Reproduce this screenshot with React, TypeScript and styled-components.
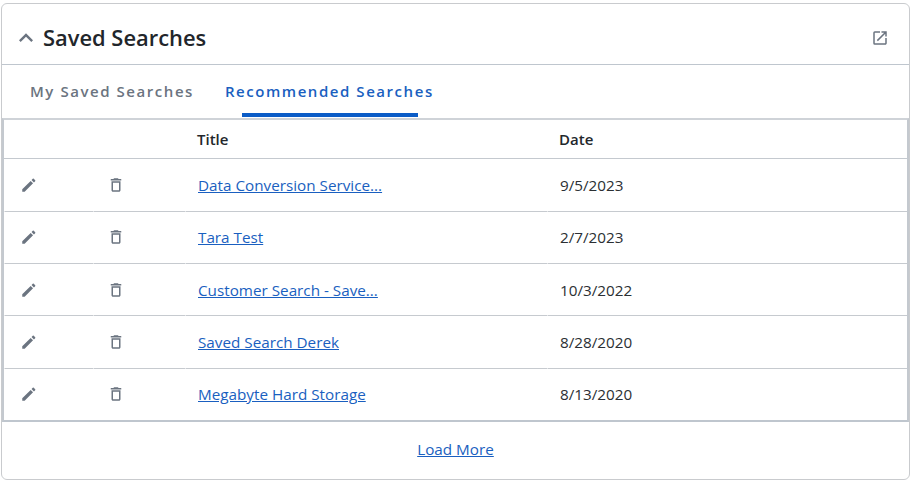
import React from "react";
import styled, { createGlobalStyle } from "styled-components";

const Global = createGlobalStyle`
  html, body { margin: 0; padding: 0; background: #fff; }
  body { font-family: "Open Sans", "Noto Sans", sans-serif; }
`;

const Card = styled.section`
  box-sizing: border-box;
  width: 909px;
  height: 477px;
  margin: 3px 0 0 1px;
  border: 1px solid #c9cbce;
  border-radius: 6px;
  background: #fff;
  display: flex;
  flex-direction: column;
`;

const Header = styled.header`
  box-sizing: border-box;
  height: 61px;
  flex: none;
  display: flex;
  align-items: center;
  padding: 7px 20px 0 10px;
  border-bottom: 1px solid #bfc6ce;
`;

const Heading = styled.h2`
  margin: 0 0 0 3px;
  flex: 1;
  font-size: 21.9px;
  line-height: 28px;
  font-weight: 600;
  color: #22262b;
`;

const Tabs = styled.nav`
  box-sizing: border-box;
  height: 53px;
  flex: none;
  display: flex;
  padding-left: 28px;
  gap: 31px;
`;

const Tab = styled.div<{ $active?: boolean }>`
  position: relative;
  height: 53px;
  display: flex;
  align-items: center;
  padding-bottom: 1px;
  box-sizing: border-box;
  font-size: 15px;
  font-weight: 600;
  letter-spacing: 1.55px;
  color: ${(p) => (p.$active ? "#1a5fc0" : "#6b7480")};
  ${(p) =>
    p.$active &&
    `&::after {
      content: "";
      position: absolute;
      left: 17px;
      right: 16px;
      bottom: 1px;
      height: 4px;
      background: #0b5cc7;
    }`}
`;

const Table = styled.table`
  box-sizing: border-box;
  width: 907px;
  height: 303px;
  flex: none;
  border-collapse: separate;
  border-spacing: 0;
  table-layout: fixed;
  border-top: 2px solid #cfd3d8;
  border-left: 2px solid #c4c9cf;
  border-right: 2px solid #c4c9cf;
  border-bottom: 2px solid #bfc6ce;
`;

const HeadCell = styled.th`
  box-sizing: border-box;
  height: 39.2px;
  padding: 0 0 0 12px;
  text-align: left;
  font-size: 15px;
  font-weight: 600;
  color: #23272c;
  border-bottom: 1px solid #c4c9cf;
`;

const Cell = styled.td`
  box-sizing: border-box;
  height: 52.4px;
  padding: 0 0 0 12px;
  font-size: 15.25px;
  color: #2b2f33;
  border-bottom: 1px solid #c6cacf;
  border-left: 1px solid #fff;
  tr:last-child & {
    height: 51.4px;
    border-bottom: none;
  }
`;

const IconCell = styled(Cell)`
  padding: 0 0 0 15px;
  line-height: 0;
`;

const TrashCell = styled(IconCell)`
  padding-left: 13px;
`;

const TitleLink = styled.a`
  color: #1a5fc0;
  text-decoration: underline;
`;

const Footer = styled.footer`
  flex: 1;
  display: flex;
  align-items: center;
  justify-content: center;
  padding-bottom: 4px;
`;

const LoadMore = styled.a`
  font-size: 15.25px;
  color: #1a5fc0;
  text-decoration: underline;
`;

const Icon = styled.svg`
  display: inline-block;
  fill: #6b7480;
`;

const ChevronIcon = styled(Icon)`
  flex: none;
`;

const Chevron = () => (
  <ChevronIcon width="28" height="28" viewBox="0 0 24 24">
    <path d="M12 8l-6 6 1.41 1.41L12 10.83l4.59 4.58L18 14z" />
  </ChevronIcon>
);
const External = () => (
  <Icon width="18" height="18" viewBox="0 0 24 24">
    <path d="M19 19H5V5h7V3H5a2 2 0 0 0-2 2v14a2 2 0 0 0 2 2h14c1.1 0 2-.9 2-2v-7h-2v7zM14 3v2h3.59l-9.83 9.83 1.41 1.41L19 6.41V10h2V3h-7z" />
  </Icon>
);
const Pencil = () => (
  <Icon width="18" height="18" viewBox="0 0 24 24">
    <path d="M3 21v-3.2L14.2 6.6l3.2 3.2L6.2 21H3zM15.4 5.4l1.6-1.6a1 1 0 0 1 1.4 0l1.8 1.8a1 1 0 0 1 0 1.4l-1.6 1.6-3.2-3.2z" />
  </Icon>
);
const Trash = () => (
  <Icon width="18" height="18" viewBox="0 0 24 24">
    <path d="M16 9v10H8V9h8m-1.5-6h-5l-1 1H5v2h14V4h-3.5l-1-1zM18 7H6v12c0 1.1.9 2 2 2h8c1.1 0 2-.9 2-2V7z" />
  </Icon>
);

const rows = [
  ["Data Conversion Service...", "9/5/2023"],
  ["Tara Test", "2/7/2023"],
  ["Customer Search - Save...", "10/3/2022"],
  ["Saved Search Derek", "8/28/2020"],
  ["Megabyte Hard Storage", "8/13/2020"],
];

export default function App() {
  return (
    <>
      <Global />
      <Card>
        <Header>
          <Chevron />
          <Heading>Saved Searches</Heading>
          <External />
        </Header>
        <Tabs>
          <Tab>My Saved Searches</Tab>
          <Tab $active>Recommended Searches</Tab>
        </Tabs>
        <Table>
          <colgroup>
            <col style={{ width: 89 }} />
            <col style={{ width: 92 }} />
            <col style={{ width: 362 }} />
            <col />
          </colgroup>
          <thead>
            <tr>
              <HeadCell />
              <HeadCell />
              <HeadCell>Title</HeadCell>
              <HeadCell>Date</HeadCell>
            </tr>
          </thead>
          <tbody>
            {rows.map(([title, date]) => (
              <tr key={title}>
                <IconCell><Pencil /></IconCell>
                <TrashCell><Trash /></TrashCell>
                <Cell><TitleLink href="#">{title}</TitleLink></Cell>
                <Cell>{date}</Cell>
              </tr>
            ))}
          </tbody>
        </Table>
        <Footer>
          <LoadMore href="#">Load More</LoadMore>
        </Footer>
      </Card>
    </>
  );
}
